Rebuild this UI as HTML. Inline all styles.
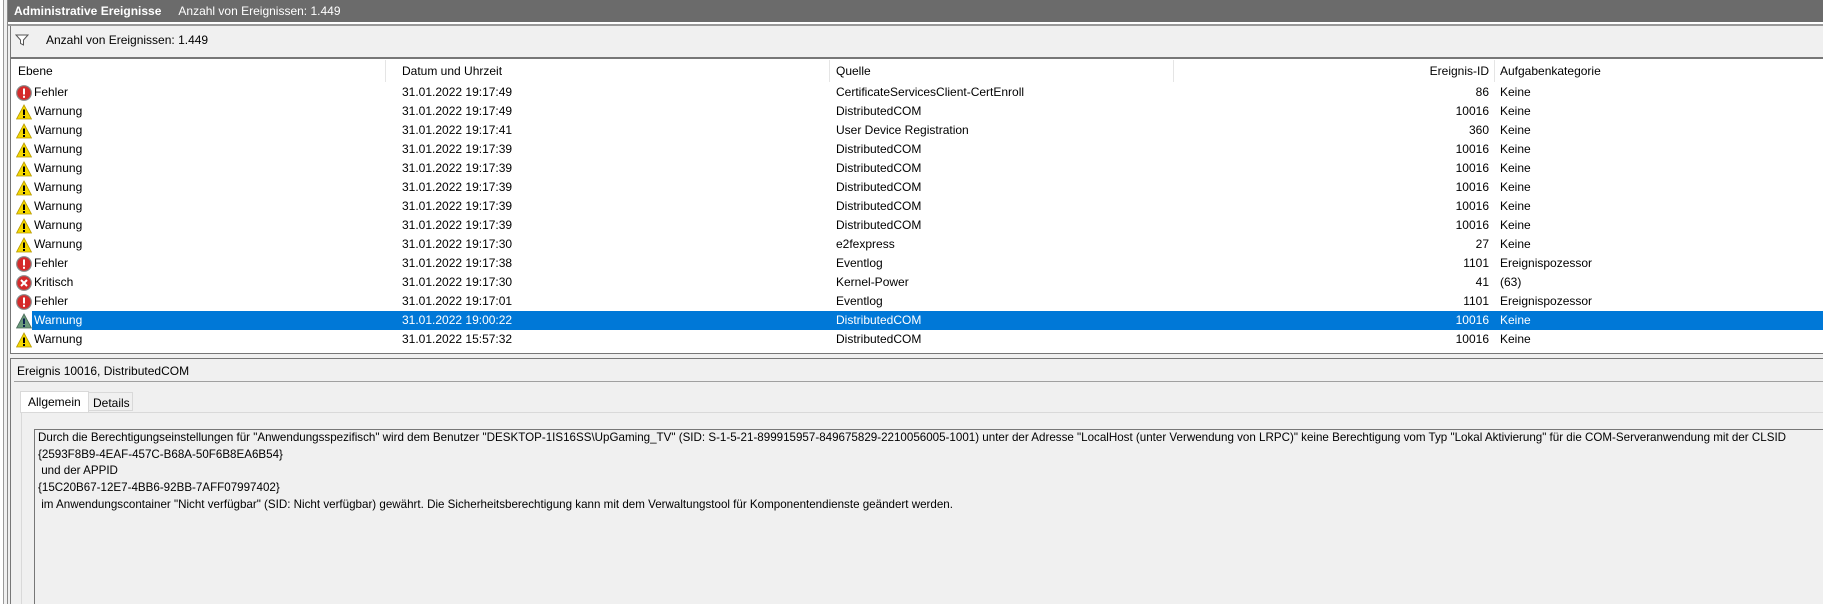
<!DOCTYPE html>
<html><head><meta charset="utf-8"><style>
*{margin:0;padding:0;box-sizing:border-box}
body{width:1823px;height:604px;overflow:hidden;background:#f0f0f0;font-family:"Liberation Sans",sans-serif;font-size:12px;color:#000;position:relative}
.abs{position:absolute}
.row{position:absolute;left:11px;right:0;height:19px;line-height:19px;white-space:nowrap}
.row span{position:absolute}
.c1{left:23px}.c2{left:391px}.c3{left:825px}.c4{right:334px;text-align:right}.c5{left:1489px}
.sel{background:#0078d7;color:#fff}
.ic{position:absolute;left:5px;top:2px;width:16px;height:16px}
</style></head><body>
<div class="abs" style="left:0;top:0;width:3px;height:604px;background:#fff"></div>
<div class="abs" style="left:3px;top:0;width:1px;height:604px;background:#999"></div>
<div class="abs" style="left:7px;top:0;width:1px;height:604px;background:#888"></div>
<div class="abs" style="left:8px;top:0;right:0;height:22px;background:#6b6b6b;color:#fff;line-height:22px;padding-left:6px;font-size:12px"><b>Administrative Ereignisse</b><span style="margin-left:17px">Anzahl von Ereignissen: 1.449</span></div>
<div class="abs" style="left:8px;top:22px;right:0;height:2px;background:#fff"></div>
<div class="abs" style="left:8px;top:24px;right:0;height:2px;background:#999"></div>
<div class="abs" style="left:10px;top:26px;right:0;height:32px;background:#f0f0f0;border-left:1px solid #777"></div>
<svg class="abs" style="left:15px;top:34px" width="14" height="12" viewBox="0 0 14 12"><path d="M1 1H13L8.5 6V11L5.5 9.5V6Z" fill="#fff" stroke="#555" stroke-width="1"/></svg>
<div class="abs" style="left:46px;top:33px;font-size:12px">Anzahl von Ereignissen: 1.449</div>
<div class="abs" style="left:10px;top:57px;right:0;height:297px;background:#fff;border-top:2px solid #777;border-left:1px solid #777;border-bottom:1px solid #777"></div>
<div class="abs" style="left:385px;top:60px;width:1px;height:22px;background:#e5e5e5"></div>
<div class="abs" style="left:829px;top:60px;width:1px;height:22px;background:#e5e5e5"></div>
<div class="abs" style="left:1173px;top:60px;width:1px;height:22px;background:#e5e5e5"></div>
<div class="abs" style="left:1494px;top:60px;width:1px;height:22px;background:#e5e5e5"></div>
<div class="row" style="top:61px;height:20px;line-height:20px"><span style="left:7px">Ebene</span><span class="c2">Datum und Uhrzeit</span><span class="c3">Quelle</span><span class="c4">Ereignis-ID</span><span class="c5">Aufgabenkategorie</span></div>
<svg width="0" height="0" style="position:absolute"><defs>
<g id="err"><circle cx="8" cy="8" r="7.3" fill="#d42a2a" stroke="#888" stroke-width="1.2"/><rect x="7" y="3.5" width="2" height="6" fill="#fff"/><rect x="7" y="10.8" width="2" height="2" fill="#fff"/></g>
<g id="crit"><circle cx="8" cy="8" r="7.3" fill="#d42a2a" stroke="#888" stroke-width="1.2"/><path d="M5 5L11 11M11 5L5 11" stroke="#fff" stroke-width="2"/></g>
<g id="warn"><path d="M8 1L15.5 15H0.5Z" fill="#f5d800" stroke="#b89a00" stroke-width="0.8"/><rect x="7" y="5.5" width="2" height="5.5" fill="#000"/><rect x="7" y="12" width="2" height="2" fill="#000"/></g>
<g id="warns"><path d="M8 1L15.5 15H0.5Z" fill="#6a9a7a" stroke="#4a6a5a" stroke-width="0.8"/><rect x="7" y="5.5" width="2" height="5.5" fill="#0a2050"/><rect x="7" y="12" width="2" height="2" fill="#0a2050"/></g>
</defs></svg>
<div class="row" style="top:83px"><svg class="ic"><use href="#err"/></svg><span class="c1">Fehler</span><span class="c2">31.01.2022 19:17:49</span><span class="c3">CertificateServicesClient-CertEnroll</span><span class="c4">86</span><span class="c5">Keine</span></div>
<div class="row" style="top:102px"><svg class="ic"><use href="#warn"/></svg><span class="c1">Warnung</span><span class="c2">31.01.2022 19:17:49</span><span class="c3">DistributedCOM</span><span class="c4">10016</span><span class="c5">Keine</span></div>
<div class="row" style="top:121px"><svg class="ic"><use href="#warn"/></svg><span class="c1">Warnung</span><span class="c2">31.01.2022 19:17:41</span><span class="c3">User Device Registration</span><span class="c4">360</span><span class="c5">Keine</span></div>
<div class="row" style="top:140px"><svg class="ic"><use href="#warn"/></svg><span class="c1">Warnung</span><span class="c2">31.01.2022 19:17:39</span><span class="c3">DistributedCOM</span><span class="c4">10016</span><span class="c5">Keine</span></div>
<div class="row" style="top:159px"><svg class="ic"><use href="#warn"/></svg><span class="c1">Warnung</span><span class="c2">31.01.2022 19:17:39</span><span class="c3">DistributedCOM</span><span class="c4">10016</span><span class="c5">Keine</span></div>
<div class="row" style="top:178px"><svg class="ic"><use href="#warn"/></svg><span class="c1">Warnung</span><span class="c2">31.01.2022 19:17:39</span><span class="c3">DistributedCOM</span><span class="c4">10016</span><span class="c5">Keine</span></div>
<div class="row" style="top:197px"><svg class="ic"><use href="#warn"/></svg><span class="c1">Warnung</span><span class="c2">31.01.2022 19:17:39</span><span class="c3">DistributedCOM</span><span class="c4">10016</span><span class="c5">Keine</span></div>
<div class="row" style="top:216px"><svg class="ic"><use href="#warn"/></svg><span class="c1">Warnung</span><span class="c2">31.01.2022 19:17:39</span><span class="c3">DistributedCOM</span><span class="c4">10016</span><span class="c5">Keine</span></div>
<div class="row" style="top:235px"><svg class="ic"><use href="#warn"/></svg><span class="c1">Warnung</span><span class="c2">31.01.2022 19:17:30</span><span class="c3">e2fexpress</span><span class="c4">27</span><span class="c5">Keine</span></div>
<div class="row" style="top:254px"><svg class="ic"><use href="#err"/></svg><span class="c1">Fehler</span><span class="c2">31.01.2022 19:17:38</span><span class="c3">Eventlog</span><span class="c4">1101</span><span class="c5">Ereignispozessor</span></div>
<div class="row" style="top:273px"><svg class="ic"><use href="#crit"/></svg><span class="c1">Kritisch</span><span class="c2">31.01.2022 19:17:30</span><span class="c3">Kernel-Power</span><span class="c4">41</span><span class="c5">(63)</span></div>
<div class="row" style="top:292px"><svg class="ic"><use href="#err"/></svg><span class="c1">Fehler</span><span class="c2">31.01.2022 19:17:01</span><span class="c3">Eventlog</span><span class="c4">1101</span><span class="c5">Ereignispozessor</span></div>
<div class="row" style="top:311px"><svg class="ic"><use href="#warns"/></svg><div class="sel" style="position:absolute;left:21px;right:0;top:0;height:19px"></div><span class="c1" style="color:#fff">Warnung</span><span class="c2" style="color:#fff">31.01.2022 19:00:22</span><span class="c3" style="color:#fff">DistributedCOM</span><span class="c4" style="color:#fff">10016</span><span class="c5" style="color:#fff">Keine</span></div>
<div class="row" style="top:330px"><svg class="ic"><use href="#warn"/></svg><span class="c1">Warnung</span><span class="c2">31.01.2022 15:57:32</span><span class="c3">DistributedCOM</span><span class="c4">10016</span><span class="c5">Keine</span></div>
<div class="abs" style="left:10px;top:358px;right:0;height:1px;background:#777"></div>
<div class="abs" style="left:10px;top:358px;width:1px;height:246px;background:#777"></div>
<div class="abs" style="left:17px;top:364px;font-size:12px">Ereignis 10016, DistributedCOM</div>
<div class="abs" style="left:14px;top:381px;right:0;height:1px;background:#a0a0a0"></div>
<div class="abs" style="left:20px;top:391px;width:69px;height:22px;background:#fff;border:1px solid #d9d9d9;border-bottom:none;padding:3px 0 0 7px">Allgemein</div>
<div class="abs" style="left:89px;top:392px;width:44px;height:19px;background:#f0f0f0;border:1px solid #d9d9d9;border-left:none;padding:3px 0 0 4px">Details</div>
<div class="abs" style="left:21px;top:412px;right:0;height:192px;border-top:1px solid #d9d9d9;border-left:1px solid #d9d9d9;background:#f0f0f0"></div>
<div class="abs" style="left:34px;top:429px;right:0;height:175px;border-top:1px solid #777;border-left:1px solid #777;background:#f0f0f0;padding:0 0 0 3px;line-height:16.7px;white-space:pre;font-size:11.6px">Durch die Berechtigungseinstellungen für "Anwendungsspezifisch" wird dem Benutzer "DESKTOP-1IS16SS\UpGaming_TV" (SID: S-1-5-21-899915957-849675829-2210056005-1001) unter der Adresse "LocalHost (unter Verwendung von LRPC)" keine Berechtigung vom Typ "Lokal Aktivierung" für die COM-Serveranwendung mit der CLSID
{2593F8B9-4EAF-457C-B68A-50F6B8EA6B54}
 und der APPID
{15C20B67-12E7-4BB6-92BB-7AFF07997402}
 im Anwendungscontainer "Nicht verfügbar" (SID: Nicht verfügbar) gewährt. Die Sicherheitsberechtigung kann mit dem Verwaltungstool für Komponentendienste geändert werden.</div>
</body></html>
